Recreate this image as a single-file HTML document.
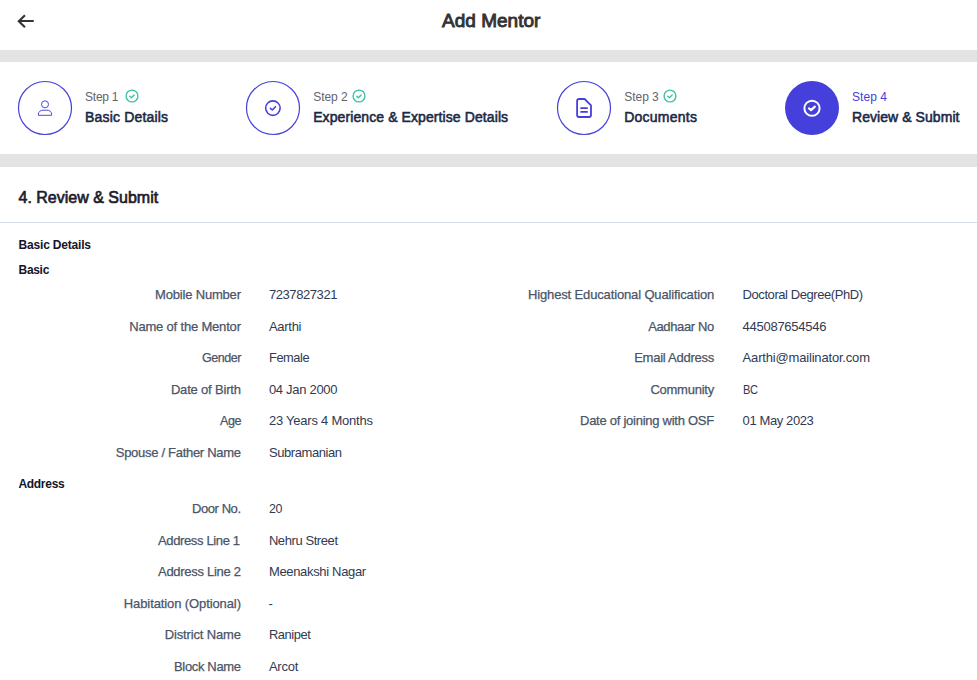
<!DOCTYPE html>
<html><head><meta charset="utf-8"><style>
html,body{margin:0;padding:0;background:#fff;}
body{width:977px;height:680px;position:relative;overflow:hidden;font-family:"Liberation Sans",sans-serif;}
.t{position:absolute;white-space:nowrap;}
.ic{position:absolute;overflow:visible;}
.band{position:absolute;left:0;width:977px;background:#e3e3e3;}
</style></head><body>
<div class="band" style="top:50px;height:12px"></div>
<div class="band" style="top:154px;height:13px"></div>
<div style="position:absolute;left:0;top:222px;width:977px;height:1px;background:#d6dde8"></div>
<svg class="ic" style="left:0;top:0" width="60" height="50" viewBox="0 0 60 50"><path d="M32.7 21 H19.5 M24.2 15.9 L18.8 21.2 L24.2 26.5" fill="none" stroke="#333" stroke-width="2.1" stroke-linecap="square" stroke-linejoin="miter"/></svg>
<svg class="ic" style="left:0;top:62px" width="977" height="92" viewBox="0 62 977 92">
<circle cx="45" cy="108" r="26.5" fill="none" stroke="#4540dc" stroke-width="1.2"/>
<circle cx="45" cy="104.3" r="3.5" fill="none" stroke="#4540dc" stroke-width="0.95"/>
<path d="M38.4 115.3 V114 C38.4 111.8 40.6 110.2 43 110.2 H47 C49.4 110.2 51.6 111.8 51.6 114 V115.3 Z" fill="none" stroke="#4540dc" stroke-width="0.95" stroke-linejoin="round"/>
<circle cx="273" cy="108" r="26.5" fill="none" stroke="#4540dc" stroke-width="1.2"/>
<circle cx="272.9" cy="108.1" r="7.25" fill="none" stroke="#4540dc" stroke-width="1.55"/>
<path d="M270.4 108.4 L272.3 110 L275.5 106.7" fill="none" stroke="#4540dc" stroke-width="1.6" stroke-linecap="round" stroke-linejoin="round"/>
<circle cx="584" cy="108" r="26.5" fill="none" stroke="#4540dc" stroke-width="1.2"/>
<path d="M577.1 101 Q577.1 99 579.1 99 H584.6 L591 105.4 V115 Q591 117 589 117 H579.1 Q577.1 117 577.1 115 Z" fill="none" stroke="#4540dc" stroke-width="1.8" stroke-linejoin="round"/>
<path d="M581 108.1 H587.1 M581 111.9 H587.1" fill="none" stroke="#4540dc" stroke-width="1.7" stroke-linecap="round"/>
<circle cx="812" cy="108" r="27" fill="#4540dc"/>
<circle cx="812" cy="108.25" r="7.6" fill="none" stroke="#fff" stroke-width="2"/>
<path d="M809 108.4 L811 110.1 L814.9 106.6" fill="none" stroke="#fff" stroke-width="2.1" stroke-linecap="round" stroke-linejoin="round"/>
</svg>
<svg class="ic" style="left:124.5px;top:88.7px" width="14" height="14" viewBox="0 0 14 14"><circle cx="7" cy="7" r="5.9" fill="none" stroke="#3cc4a4" stroke-width="1.4"/><path d="M4.7 7.3 L6.4 8.8 L9.1 6.0" fill="none" stroke="#3cc4a4" stroke-width="1.4" stroke-linecap="round" stroke-linejoin="round"/></svg>
<svg class="ic" style="left:352.2px;top:88.7px" width="14" height="14" viewBox="0 0 14 14"><circle cx="7" cy="7" r="5.9" fill="none" stroke="#3cc4a4" stroke-width="1.4"/><path d="M4.7 7.3 L6.4 8.8 L9.1 6.0" fill="none" stroke="#3cc4a4" stroke-width="1.4" stroke-linecap="round" stroke-linejoin="round"/></svg>
<svg class="ic" style="left:663.4px;top:88.7px" width="14" height="14" viewBox="0 0 14 14"><circle cx="7" cy="7" r="5.9" fill="none" stroke="#3cc4a4" stroke-width="1.4"/><path d="M4.7 7.3 L6.4 8.8 L9.1 6.0" fill="none" stroke="#3cc4a4" stroke-width="1.4" stroke-linecap="round" stroke-linejoin="round"/></svg>
<span class="t" style="left:442.00px;top:11px;font-size:19px;line-height:19px;color:#333333;letter-spacing:0.020px;-webkit-text-stroke:0.9px #333333;">Add Mentor</span>
<span class="t" style="left:85.10px;top:91px;font-size:12px;line-height:12px;color:#636370;letter-spacing:-0.277px;">Step 1</span>
<span class="t" style="left:85.10px;top:110px;font-size:14px;line-height:14px;color:#1b2945;letter-spacing:0.165px;-webkit-text-stroke:0.55px #1b2945;">Basic Details</span>
<span class="t" style="left:313.20px;top:91px;font-size:12px;line-height:12px;color:#636370;letter-spacing:-0.057px;">Step 2</span>
<span class="t" style="left:313.20px;top:110px;font-size:14px;line-height:14px;color:#1b2945;letter-spacing:0.093px;-webkit-text-stroke:0.55px #1b2945;">Experience &amp; Expertise Details</span>
<span class="t" style="left:624.20px;top:91px;font-size:12px;line-height:12px;color:#636370;letter-spacing:-0.018px;">Step 3</span>
<span class="t" style="left:624.20px;top:110px;font-size:14px;line-height:14px;color:#1b2945;letter-spacing:0.236px;-webkit-text-stroke:0.55px #1b2945;">Documents</span>
<span class="t" style="left:852.00px;top:91px;font-size:12px;line-height:12px;color:#4540dc;letter-spacing:0.062px;">Step 4</span>
<span class="t" style="left:852.00px;top:110px;font-size:14px;line-height:14px;color:#1b2945;letter-spacing:0.065px;-webkit-text-stroke:0.55px #1b2945;">Review &amp; Submit</span>
<span class="t" style="left:18.50px;top:190px;font-size:16px;line-height:16px;color:#1c1c2c;letter-spacing:0.005px;-webkit-text-stroke:0.65px #1c1c2c;">4. Review &amp; Submit</span>
<span class="t" style="left:18.60px;top:239px;font-size:12px;line-height:12px;font-weight:700;color:#14142b;letter-spacing:-0.192px;">Basic Details</span>
<span class="t" style="left:18.60px;top:264px;font-size:12px;line-height:12px;font-weight:700;color:#14142b;letter-spacing:-0.329px;">Basic</span>
<span class="t" style="left:18.40px;top:478px;font-size:12px;line-height:12px;font-weight:700;color:#14142b;letter-spacing:-0.286px;">Address</span>
<span class="t" style="left:155.10px;top:288px;font-size:13px;line-height:13px;color:#4a5568;letter-spacing:-0.187px;-webkit-text-stroke:0.25px #4a5568;">Mobile Number</span>
<span class="t" style="left:268.90px;top:288px;font-size:13px;line-height:13px;color:#303a52;letter-spacing:-0.411px;">7237827321</span>
<span class="t" style="left:129.20px;top:320px;font-size:13px;line-height:13px;color:#4a5568;letter-spacing:-0.182px;-webkit-text-stroke:0.25px #4a5568;">Name of the Mentor</span>
<span class="t" style="left:268.90px;top:320px;font-size:13px;line-height:13px;color:#303a52;letter-spacing:-0.271px;">Aarthi</span>
<span class="t" style="left:201.60px;top:351px;font-size:13px;line-height:13px;color:#4a5568;letter-spacing:-0.450px;-webkit-text-stroke:0.25px #4a5568;transform:scaleX(0.9584);transform-origin:0.00px 0;">Gender</span>
<span class="t" style="left:268.90px;top:351px;font-size:13px;line-height:13px;color:#303a52;letter-spacing:-0.450px;transform:scaleX(0.9856);transform-origin:0.00px 0;">Female</span>
<span class="t" style="left:170.90px;top:383px;font-size:13px;line-height:13px;color:#4a5568;letter-spacing:-0.179px;-webkit-text-stroke:0.25px #4a5568;">Date of Birth</span>
<span class="t" style="left:268.90px;top:383px;font-size:13px;line-height:13px;color:#303a52;letter-spacing:-0.296px;">04 Jan 2000</span>
<span class="t" style="left:219.50px;top:414px;font-size:13px;line-height:13px;color:#4a5568;letter-spacing:-0.450px;-webkit-text-stroke:0.25px #4a5568;transform:scaleX(0.9674);transform-origin:0.00px 0;">Age</span>
<span class="t" style="left:268.90px;top:414px;font-size:13px;line-height:13px;color:#303a52;letter-spacing:-0.230px;">23 Years 4 Months</span>
<span class="t" style="left:115.80px;top:446px;font-size:13px;line-height:13px;color:#4a5568;letter-spacing:-0.294px;-webkit-text-stroke:0.25px #4a5568;">Spouse / Father Name</span>
<span class="t" style="left:268.90px;top:446px;font-size:13px;line-height:13px;color:#303a52;letter-spacing:-0.413px;">Subramanian</span>
<span class="t" style="left:192.10px;top:502px;font-size:13px;line-height:13px;color:#4a5568;letter-spacing:-0.445px;-webkit-text-stroke:0.25px #4a5568;">Door No.</span>
<span class="t" style="left:268.90px;top:502px;font-size:13px;line-height:13px;color:#303a52;letter-spacing:-0.450px;transform:scaleX(0.9569);transform-origin:0.00px 0;">20</span>
<span class="t" style="left:158.00px;top:534px;font-size:13px;line-height:13px;color:#4a5568;letter-spacing:-0.363px;-webkit-text-stroke:0.25px #4a5568;">Address Line 1</span>
<span class="t" style="left:268.90px;top:534px;font-size:13px;line-height:13px;color:#303a52;letter-spacing:-0.418px;">Nehru Street</span>
<span class="t" style="left:158.00px;top:565px;font-size:13px;line-height:13px;color:#4a5568;letter-spacing:-0.286px;-webkit-text-stroke:0.25px #4a5568;">Address Line 2</span>
<span class="t" style="left:268.90px;top:565px;font-size:13px;line-height:13px;color:#303a52;letter-spacing:-0.328px;">Meenakshi Nagar</span>
<span class="t" style="left:123.80px;top:597px;font-size:13px;line-height:13px;color:#4a5568;letter-spacing:-0.102px;-webkit-text-stroke:0.25px #4a5568;">Habitation (Optional)</span>
<span class="t" style="left:268.40px;top:597px;font-size:13px;line-height:13px;color:#303a52;letter-spacing:0.000px;">-</span>
<span class="t" style="left:164.80px;top:628px;font-size:13px;line-height:13px;color:#4a5568;letter-spacing:-0.150px;-webkit-text-stroke:0.25px #4a5568;">District Name</span>
<span class="t" style="left:268.90px;top:628px;font-size:13px;line-height:13px;color:#303a52;letter-spacing:-0.450px;transform:scaleX(0.9926);transform-origin:0.00px 0;">Ranipet</span>
<span class="t" style="left:174.00px;top:660px;font-size:13px;line-height:13px;color:#4a5568;letter-spacing:-0.342px;-webkit-text-stroke:0.25px #4a5568;">Block Name</span>
<span class="t" style="left:268.90px;top:660px;font-size:13px;line-height:13px;color:#303a52;letter-spacing:-0.211px;">Arcot</span>
<span class="t" style="left:528.00px;top:288px;font-size:13px;line-height:13px;color:#4a5568;letter-spacing:-0.143px;-webkit-text-stroke:0.25px #4a5568;">Highest Educational Qualification</span>
<span class="t" style="left:742.60px;top:288px;font-size:13px;line-height:13px;color:#303a52;letter-spacing:-0.432px;">Doctoral Degree(PhD)</span>
<span class="t" style="left:648.20px;top:320px;font-size:13px;line-height:13px;color:#4a5568;letter-spacing:-0.375px;-webkit-text-stroke:0.25px #4a5568;">Aadhaar No</span>
<span class="t" style="left:742.60px;top:320px;font-size:13px;line-height:13px;color:#303a52;letter-spacing:-0.270px;">445087654546</span>
<span class="t" style="left:634.20px;top:351px;font-size:13px;line-height:13px;color:#4a5568;letter-spacing:-0.258px;-webkit-text-stroke:0.25px #4a5568;">Email Address</span>
<span class="t" style="left:742.60px;top:351px;font-size:13px;line-height:13px;color:#303a52;letter-spacing:-0.178px;">Aarthi@mailinator.com</span>
<span class="t" style="left:650.40px;top:383px;font-size:13px;line-height:13px;color:#4a5568;letter-spacing:-0.242px;-webkit-text-stroke:0.25px #4a5568;">Community</span>
<span class="t" style="left:742.60px;top:383px;font-size:13px;line-height:13px;color:#303a52;letter-spacing:-0.450px;transform:scaleX(0.8517);transform-origin:0.00px 0;">BC</span>
<span class="t" style="left:580.00px;top:414px;font-size:13px;line-height:13px;color:#4a5568;letter-spacing:-0.260px;-webkit-text-stroke:0.25px #4a5568;">Date of joining with OSF</span>
<span class="t" style="left:742.60px;top:414px;font-size:13px;line-height:13px;color:#303a52;letter-spacing:-0.396px;">01 May 2023</span>
</body></html>
